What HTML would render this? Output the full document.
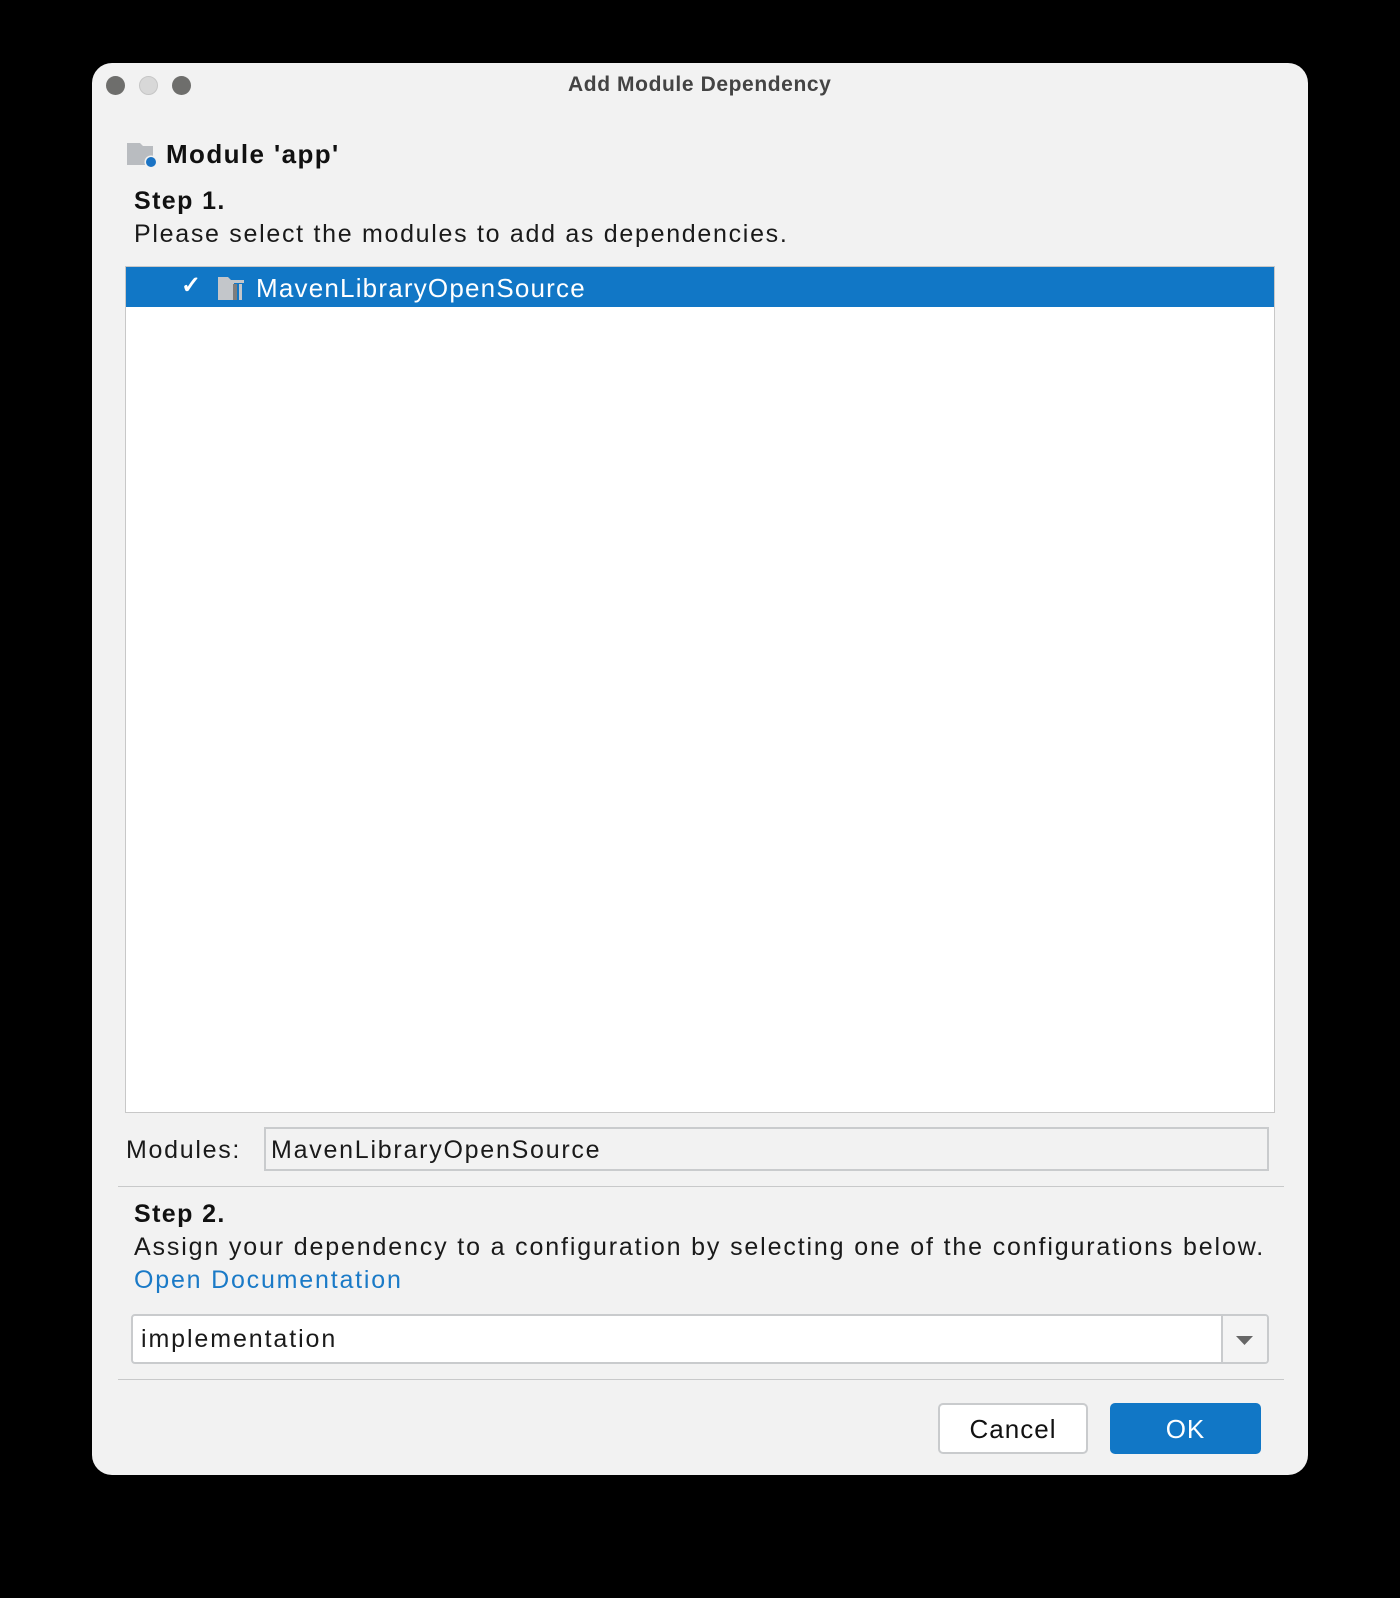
<!DOCTYPE html>
<html><head><meta charset="utf-8"><style>
*{margin:0;padding:0;box-sizing:border-box}
body{width:1400px;height:1598px;background:#000;position:relative;overflow:hidden;font-family:"Liberation Sans",sans-serif;color:#1a1a1a}
.win{position:absolute;left:92px;top:63px;width:1216px;height:1412px;background:#f2f2f2;border-radius:20px;overflow:hidden}
.t{position:absolute;white-space:nowrap;line-height:1}
.dot{position:absolute;top:76px;width:19px;height:19px;border-radius:50%}
</style></head><body>
<div class="win"></div>
<div class="dot" style="left:106px;background:#6e6e6c"></div>
<div class="dot" style="left:139px;background:#d8d8d8;border:1px solid #c6c6c6"></div>
<div class="dot" style="left:172px;background:#6e6e6c"></div>
<div class="t" style="left:568px;top:74px;font-size:21px;font-weight:bold;color:#444;letter-spacing:0.6px">Add Module Dependency</div>

<svg style="position:absolute;left:126px;top:142px" width="32" height="28" viewBox="0 0 32 28">
<path d="M1 1h13l3 3h10v19H1z" fill="#b9bcc0"/>
<circle cx="25" cy="20" r="6.5" fill="#f2f2f2"/>
<circle cx="25" cy="20" r="5" fill="#1a73c4"/>
</svg>
<div class="t" style="left:166px;top:141px;font-size:26px;font-weight:bold;color:#111;letter-spacing:1.4px">Module 'app'</div>
<div class="t" style="left:134px;top:189px;font-size:25px;font-weight:bold;color:#111;letter-spacing:1.4px">Step 1.</div>
<div class="t" style="left:134px;top:222px;font-size:25px;letter-spacing:1.7px">Please select the modules to add as dependencies.</div>

<div style="position:absolute;left:125px;top:266px;width:1150px;height:847px;background:#fff;border:1px solid #c8c8c8"></div>
<div style="position:absolute;left:126px;top:267px;width:1148px;height:40px;background:#1177c6"></div>
<div class="t" style="left:181px;top:274px;font-size:24px;color:#fff;font-weight:bold">✓</div>
<svg style="position:absolute;left:218px;top:276px" width="30" height="26" viewBox="0 0 30 26">
<path d="M0 1h10l3 3h13v3H16v17H0z" fill="#c3c6ca"/>
<rect x="15" y="8" width="4" height="16" fill="#7d7d7d"/>
<rect x="21" y="8" width="3" height="16" fill="#c3c6ca"/>
</svg>
<div class="t" style="left:256px;top:275px;font-size:26px;color:#fff;letter-spacing:1.2px">MavenLibraryOpenSource</div>

<div class="t" style="left:126px;top:1138px;font-size:25px;letter-spacing:1.7px">Modules:</div>
<div style="position:absolute;left:264px;top:1127px;width:1005px;height:44px;background:#f2f2f2;border:2px solid #c9cbcd"></div>
<div class="t" style="left:271px;top:1138px;font-size:25px;letter-spacing:1.75px">MavenLibraryOpenSource</div>

<div style="position:absolute;left:118px;top:1186px;width:1166px;height:1px;background:#c8c9ca"></div>
<div class="t" style="left:134px;top:1202px;font-size:25px;font-weight:bold;color:#111;letter-spacing:1.4px">Step 2.</div>
<div class="t" style="left:134px;top:1235px;font-size:25px;letter-spacing:1.85px">Assign your dependency to a configuration by selecting one of the configurations below.</div>
<div class="t" style="left:134px;top:1268px;font-size:25px;color:#1a7ac7;letter-spacing:1.8px">Open Documentation</div>

<div style="position:absolute;left:131px;top:1314px;width:1138px;height:50px;background:#fff;border:2px solid #c9cbcd;border-radius:4px;overflow:hidden">
<div style="position:absolute;right:0;top:0;width:46px;height:100%;background:#f4f4f4;border-left:2px solid #c9cbcd"></div>
</div>
<svg style="position:absolute;left:1236px;top:1336px" width="17" height="9" viewBox="0 0 17 9"><path d="M0 0h17L8.5 9z" fill="#666"/></svg>
<div class="t" style="left:141px;top:1327px;font-size:25px;letter-spacing:1.9px">implementation</div>

<div style="position:absolute;left:118px;top:1379px;width:1166px;height:1px;background:#c8c9ca"></div>
<div style="position:absolute;left:938px;top:1403px;width:150px;height:51px;background:#fff;border:2px solid #c9cbcd;border-radius:5px"></div>
<div class="t" style="left:938px;top:1416px;width:150px;text-align:center;font-size:26px;color:#111;letter-spacing:1px">Cancel</div>
<div style="position:absolute;left:1110px;top:1403px;width:151px;height:51px;background:#1177c6;border-radius:5px"></div>
<div class="t" style="left:1110px;top:1416px;width:151px;text-align:center;font-size:26px;color:#fff;letter-spacing:1px">OK</div>
</body></html>
